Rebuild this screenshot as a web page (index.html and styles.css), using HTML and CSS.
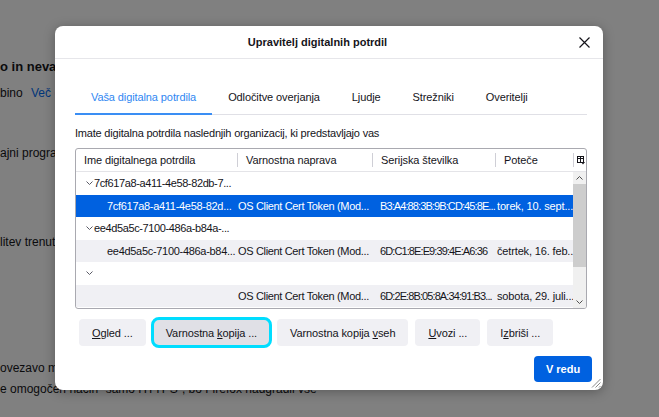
FILE: index.html
```html
<!DOCTYPE html>
<html lang="sl">
<head>
<meta charset="utf-8">
<title>Upravitelj digitalnih potrdil</title>
<link rel="stylesheet" href="styles.css">
</head>
<body>
<div class="page">
  <h2 class="pg-head">o in nevarno programsko opremo</h2>
  <p class="pg-line l1">bino <a class="pg-link">Več o tem</a></p>
  <p class="pg-line l2">ajni programi</p>
  <p class="pg-line l3">litev trenutno</p>
  <p class="pg-line l4">ovezavo med</p>
  <p class="pg-line">e omogočen način "samo HTTPS", bo Firefox nadgradil vse</p>
</div>

<div class="dialog">
  <header class="dlg-header">
    <span class="dlg-title">Upravitelj digitalnih potrdil</span>
    <button class="dlg-close" aria-label="Zapri">
      <svg width="11" height="11" viewBox="0 0 11 11"><path d="M0.5 0.5 L10.5 10.5 M10.5 0.5 L0.5 10.5" stroke="#15141a" stroke-width="1.2" fill="none"/></svg>
    </button>
  </header>

  <div class="dlg-body">
    <nav class="tabs">
      <span class="tab active">Vaša digitalna potrdila</span>
      <span class="tab">Odločitve overjanja</span>
      <span class="tab">Ljudje</span>
      <span class="tab">Strežniki</span>
      <span class="tab">Overitelji</span>
    </nav>

    <p class="intro">Imate digitalna potrdila naslednjih organizacij, ki predstavljajo vas</p>

    <div class="tree">
      <div class="tree-head">
        <div class="th"><span class="th-label">Ime digitalnega potrdila</span></div>
        <div class="th"><span class="sep"></span><span class="th-label">Varnostna naprava</span></div>
        <div class="th"><span class="sep"></span><span class="th-label">Serijska številka</span></div>
        <div class="th"><span class="sep"></span><span class="th-label">Poteče</span></div>
        <div class="th picker"><span class="sep"></span>
          <svg class="picker-icon" width="8" height="9" viewBox="0 0 8 9"><rect x="0.5" y="0.5" width="6" height="6" fill="none" stroke="#15141a"/><path d="M0.5 2.5 H6.5 M3.5 0.5 V6.5" stroke="#15141a"/><path d="M4 6 H8 L6 8.5 Z" fill="#15141a"/></svg>
        </div>
      </div>
      <div class="tree-body">
        <div class="rows">
          <div class="row">
            <div class="cell c1 grp"><svg class="chev" width="7" height="4" viewBox="0 0 7 4"><path d="M0.5 0.5 L3.5 3.5 L6.5 0.5" stroke="#5b5b66" fill="none"/></svg><span class="txt">7cf617a8-a411-4e58-82db-7...</span></div>
            <div class="cell c2"></div><div class="cell c3"></div><div class="cell c4"></div>
          </div>
          <div class="row selected">
            <div class="cell c1 child"><span class="txt">7cf617a8-a411-4e58-82d...</span></div>
            <div class="cell c2"><span class="txt">OS Client Cert Token (Mod...</span></div>
            <div class="cell c3"><span class="txt">B3:A4:88:3B:9B:CD:45:8E...</span></div>
            <div class="cell c4"><span class="txt">torek, 10. sept...</span></div>
          </div>
          <div class="row">
            <div class="cell c1 grp"><svg class="chev" width="7" height="4" viewBox="0 0 7 4"><path d="M0.5 0.5 L3.5 3.5 L6.5 0.5" stroke="#5b5b66" fill="none"/></svg><span class="txt">ee4d5a5c-7100-486a-b84a-...</span></div>
            <div class="cell c2"></div><div class="cell c3"></div><div class="cell c4"></div>
          </div>
          <div class="row alt">
            <div class="cell c1 child"><span class="txt">ee4d5a5c-7100-486a-b84...</span></div>
            <div class="cell c2"><span class="txt">OS Client Cert Token (Mod...</span></div>
            <div class="cell c3"><span class="txt">6D:C1:8E:E9:39:4E:A6:36</span></div>
            <div class="cell c4"><span class="txt">četrtek, 16. feb...</span></div>
          </div>
          <div class="row">
            <div class="cell c1 grp"><svg class="chev" width="7" height="4" viewBox="0 0 7 4"><path d="M0.5 0.5 L3.5 3.5 L6.5 0.5" stroke="#5b5b66" fill="none"/></svg></div>
            <div class="cell c2"></div><div class="cell c3"></div><div class="cell c4"></div>
          </div>
          <div class="row alt">
            <div class="cell c1 child"></div>
            <div class="cell c2"><span class="txt">OS Client Cert Token (Mod...</span></div>
            <div class="cell c3"><span class="txt">6D:2E:8B:05:8A:34:91:B3...</span></div>
            <div class="cell c4"><span class="txt">sobota, 29. juli...</span></div>
          </div>
        </div>
        <div class="scrollbar">
          <span class="sb-btn"><svg width="7" height="4" viewBox="0 0 7 4"><path d="M0.5 3.5 L3.5 0.5 L6.5 3.5" stroke="#505050" fill="none"/></svg></span>
          <span class="sb-thumb"></span>
          <span class="sb-track"></span>
          <span class="sb-btn"><svg width="7" height="4" viewBox="0 0 7 4"><path d="M0.5 0.5 L3.5 3.5 L6.5 0.5" stroke="#505050" fill="none"/></svg></span>
        </div>
      </div>
    </div>

    <div class="actions">
      <button class="btn"><u>O</u>gled ...</button>
      <button class="btn focused">Varnostna <u>k</u>opija ...</button>
      <button class="btn">Varnostna kopija <u>v</u>seh</button>
      <button class="btn"><u>U</u>vozi ...</button>
      <button class="btn">I<u>z</u>briši ...</button>
    </div>

    <div class="footer">
      <button class="btn primary">V redu</button>
    </div>
  </div>

  <svg class="grip" width="10" height="10" viewBox="0 0 10 10"><path d="M9.5 1 L1 9.5 M9.5 4.5 L4.5 9.5 M9.5 8 L8 9.5" stroke="#8a8a8a" fill="none"/></svg>
</div>
</body>
</html>
```

FILE: styles.css
```css
* { box-sizing: border-box; }

html, body {
  margin: 0;
  height: 100%;
}

body {
  background: #808080;
  font-family: "Liberation Sans", Arial, sans-serif;
  color: #0b0b0d;
  overflow: hidden;
  position: relative;
}

/* background page (dimmed) */
.page {
  padding-top: 56px;
  white-space: nowrap;
}

.pg-head {
  margin: 0;
  font-size: 13px;
  line-height: 21px;
  font-weight: bold;
}

.pg-line {
  margin: 0;
  font-size: 12px;
  line-height: 21px;
}

.l1 { margin-top: 6px; }
.l2 { margin-top: 39px; }
.l3 { margin-top: 68px; }
.l4 { margin-top: 105px; }

.pg-link {
  color: #00357a;
  margin-left: 5px;
}

/* dialog */
.dialog {
  position: absolute;
  left: 55px;
  top: 26px;
  width: 548px;
  height: 364px;
  background: #fff;
  border-radius: 8px;
  box-shadow: 0 2px 12px rgba(0, 0, 0, 0.3);
  display: flex;
  flex-direction: column;
  font-size: 11px;
  letter-spacing: -0.2px;
  color: #15141a;
}

.dlg-header {
  height: 33px;
  flex: none;
  border-bottom: 1px solid #e6e6ea;
  display: flex;
  align-items: center;
}

.dlg-title {
  flex: 1;
  text-align: center;
  padding-left: 8px;
  font-weight: bold;
  letter-spacing: 0;
}

.dlg-close {
  width: 24px;
  height: 24px;
  margin-right: 7px;
  padding: 0;
  border: none;
  background: transparent;
  display: flex;
  align-items: center;
  justify-content: center;
}

.dlg-body {
  flex: 1;
  display: flex;
  flex-direction: column;
  padding: 0 16px 0 20px;
}

/* tabs */
.tabs {
  margin-top: 21px;
  display: flex;
  border-bottom: 1px solid #e0e0e6;
}

.tab {
  padding: 8px 16px 7px;
  line-height: 18px;
  border-bottom: 2px solid transparent;
  margin-bottom: -1px;
  white-space: nowrap;
  letter-spacing: -0.1px;
}

.tab.active {
  color: #2f87f2;
  border-bottom-color: #3a8ef4;
}

.intro {
  margin: 9px 0 0;
  line-height: 18px;
}

/* tree */
.tree {
  margin-top: 6px;
  height: 161px;
  border: 1px solid #a9a9b0;
  border-radius: 3px;
  overflow: hidden;
  display: flex;
  flex-direction: column;
}

.tree-head {
  height: 23px;
  flex: none;
  border-bottom: 1px solid #e4e4e8;
  display: grid;
  grid-template-columns: 160px 135px 123px 79px 13px;
}

.th {
  display: flex;
  align-items: center;
  padding-left: 1px;
  white-space: nowrap;
  overflow: hidden;
  letter-spacing: -0.1px;
}

.th:first-child { padding-left: 8px; }

.sep {
  width: 1px;
  height: 14px;
  background: #cfcfd6;
  margin-right: 8px;
  flex: none;
}

.picker { padding-left: 0; }
.picker .sep { margin-right: 3px; }
.picker-icon { flex: none; }

.tree-body {
  flex: 1;
  display: flex;
}

.rows {
  width: 497px;
  flex: none;
}

.row {
  height: 22.5px;
  display: grid;
  grid-template-columns: 160px 135px 123px 79px;
  align-items: center;
  white-space: nowrap;
}

.row.alt { background: #f0f0f4; }

.row.selected {
  background: #0061e0;
  color: #fff;
}

.cell {
  display: flex;
  align-items: center;
  min-width: 0;
}

.c1.grp { padding-left: 10px; letter-spacing: -0.38px; }
.c1.child { padding-left: 31px; letter-spacing: -0.3px; }
.chev { flex: none; margin-right: 1px; }
.c2 { padding-left: 2px; letter-spacing: -0.34px; }
.c3 { padding-left: 9px; letter-spacing: -0.9px; }
.c4 { padding-left: 3px; letter-spacing: -0.15px; }

.scrollbar {
  flex: 1;
  display: flex;
  flex-direction: column;
  background: #f0f0f0;
}

.sb-btn {
  height: 12px;
  flex: none;
  display: flex;
  align-items: center;
  justify-content: center;
}

.sb-thumb {
  height: 83px;
  flex: none;
  background: #cdcdcd;
}

.sb-track { flex: 1; }

/* buttons */
.actions {
  margin-top: 10px;
  padding-left: 4px;
  display: flex;
  gap: 7px;
}

.btn {
  height: 27px;
  padding: 0 13px;
  border: none;
  border-radius: 4px;
  background: #f0f0f4;
  color: #15141a;
  font: inherit;
  letter-spacing: -0.1px;
  white-space: nowrap;
}

.btn u { text-underline-offset: 1px; }

.btn.focused {
  background: #e0e0e6;
  outline: 3px solid #00ddff;
  outline-offset: -1px;
  border-radius: 6px;
}

.footer {
  margin-top: 10px;
  margin-right: -5px;
  display: flex;
  justify-content: flex-end;
}

.btn.primary {
  height: 26px;
  width: 58px;
  padding: 0;
  background: #0061e0;
  color: #fff;
  font-weight: bold;
  letter-spacing: 0;
}

.grip {
  position: absolute;
  right: 2px;
  bottom: 2px;
}
```
